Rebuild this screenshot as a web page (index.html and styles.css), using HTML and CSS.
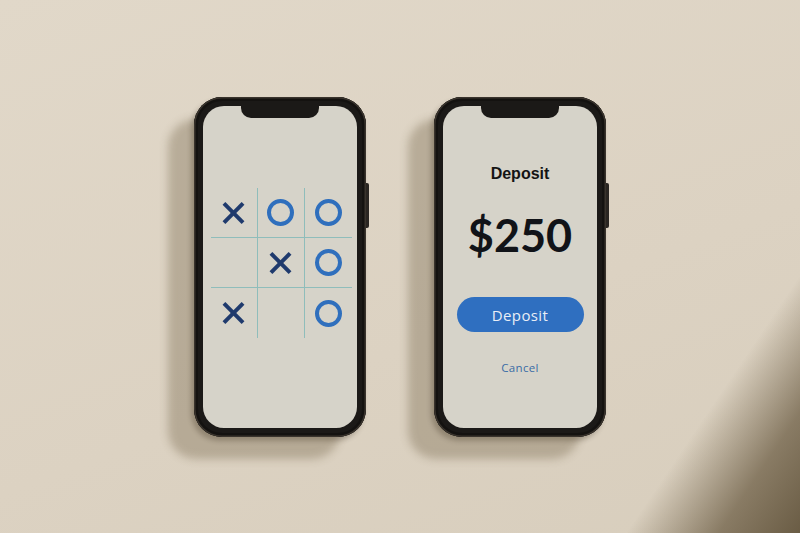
FILE: index.html
```html
<!DOCTYPE html>
<html lang="en">
  <head>
    <meta charset="UTF-8" />
    <title>Phones</title>
    <link rel="stylesheet" href="styles.css">
  </head>
  <body>
    <div class="scene">
      <div class="phone">
        <div class="screen game">
          <div class="notch"></div>
          <div class="board">
            <div class="cell"><span class="x"></span></div>
            <div class="cell"><span class="o"></span></div>
            <div class="cell"><span class="o"></span></div>
            <div class="cell"></div>
            <div class="cell"><span class="x"></span></div>
            <div class="cell"><span class="o"></span></div>
            <div class="cell"><span class="x"></span></div>
            <div class="cell"></div>
            <div class="cell"><span class="o"></span></div>
          </div>
        </div>
      </div>

      <div class="phone">
        <div class="screen deposit">
          <div class="notch"></div>
          <h1 class="title">Deposit</h1>
          <div class="amount">$250</div>
          <button class="btn">Deposit</button>
          <a class="cancel">Cancel</a>
        </div>
      </div>
    </div>
  </body>
</html>
```

FILE: styles.css
```css
html, body {
  margin: 0;
  height: 100%;
}
body {
  font-family: "Liberation Sans", Arial, sans-serif;
  background:
    linear-gradient(124deg, rgba(90, 74, 48, 0) 85%, rgba(110, 95, 70, 0.75) 93%, rgba(100, 86, 62, 0.95) 100%),
    linear-gradient(160deg, #e1d8c9 0%, #dcd2c2 60%, #d8cebd 100%);
  overflow: hidden;
}
.scene {
  display: flex;
  justify-content: center;
  align-items: center;
  gap: 68px;
  height: 100%;
  padding-top: 1px;
  box-sizing: border-box;
}
.phone {
  position: relative;
  width: 172px;
  height: 340px;
  padding: 9px;
  box-sizing: border-box;
  background: #1b1917;
  border-radius: 28px;
  box-shadow:
    inset 0 0 0 1.5px #3a342d,
    inset 0 0 0 4px #141210,
    -26px 22px 8px rgba(95, 78, 50, 0.3),
    -3px 4px 5px rgba(50, 40, 25, 0.3);
}
.phone::after {
  content: "";
  position: absolute;
  right: -3px;
  top: 86px;
  width: 3px;
  height: 45px;
  border-radius: 0 2px 2px 0;
  background: #2a2622;
}
.screen {
  position: relative;
  height: 100%;
  background: #d6d3c9;
  border-radius: 21px;
  overflow: hidden;
}
.notch {
  position: absolute;
  top: 0;
  left: 50%;
  width: 78px;
  height: 12px;
  margin-left: -39px;
  background: #1b1917;
  border-radius: 0 0 10px 10px;
}

/* tic tac toe */
.game {
  display: flex;
  align-items: center;
  justify-content: center;
  padding-bottom: 8px;
  box-sizing: border-box;
}
.board {
  display: grid;
  grid-template-columns: repeat(3, 47px);
  grid-template-rows: repeat(3, 50px);
  margin-left: 2px;
}
.cell {
  display: flex;
  align-items: center;
  justify-content: center;
  border-right: 1px solid #8fbdbb;
  border-bottom: 1px solid #8fbdbb;
}
.cell:nth-child(3n) {
  border-right: none;
}
.cell:nth-child(n+7) {
  border-bottom: none;
}
.o {
  width: 19px;
  height: 19px;
  border: 4px solid #2f6fbd;
  border-radius: 50%;
}
.x {
  position: relative;
  width: 21px;
  height: 21px;
}
.x::before,
.x::after {
  content: "";
  position: absolute;
  left: -3px;
  top: 8.5px;
  width: 27px;
  height: 4px;
  background: #1f3a6d;
  transform: rotate(45deg);
}
.x::after {
  transform: rotate(-45deg);
}

/* deposit */
.deposit {
  display: flex;
  flex-direction: column;
  align-items: center;
  padding-top: 58px;
  box-sizing: border-box;
}
.title {
  margin: 0;
  font-size: 16px;
  line-height: 20px;
  font-weight: bold;
  color: #141414;
}
.amount {
  margin-top: 26px;
  font-family: Lato, "Liberation Sans", sans-serif;
  font-size: 45px;
  line-height: 50px;
  font-weight: bold;
  color: #111318;
}
.btn {
  margin-top: 37px;
  width: 127px;
  height: 35px;
  border: none;
  border-radius: 18px;
  background: #2f6fc0;
  color: #e9eef6;
  font-family: "Open Sans", sans-serif;
  font-size: 15px;
  letter-spacing: 0.4px;
}
.cancel {
  margin-top: 28px;
  font-family: "Open Sans", sans-serif;
  font-size: 11.5px;
  letter-spacing: 0.3px;
  color: #3a6ca6;
}
```
